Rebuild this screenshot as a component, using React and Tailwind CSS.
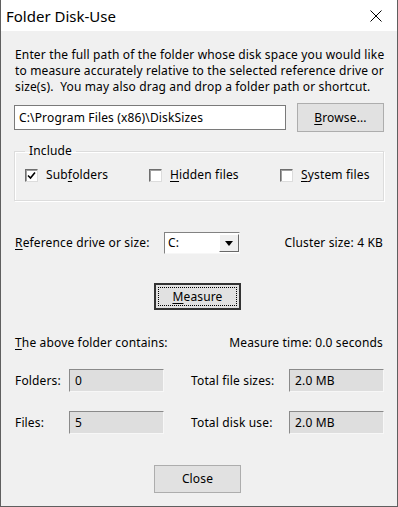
import React from 'react';

const font = { fontFamily: '"Noto Sans", "Liberation Sans", sans-serif' };

const Key = ({ children }) => <span className="underline underline-offset-2">{children}</span>;

const CheckBox = ({ checked, children, className }) => (
  <label className={`flex items-center gap-[8px] ${className}`}>
    <span className="flex h-[13px] w-[13px] items-center justify-center border-t border-l border-b border-r border-t-[#6e6e6e] border-l-[#6e6e6e] border-b-[#dcdcdc] border-r-[#dcdcdc] bg-white shadow-[inset_1px_1px_0_#a0a0a0]">
      {checked && (
        <svg width="9" height="9" viewBox="0 0 9 9">
          <path d="M1 4.5 L3.5 7 L8 1.5" fill="none" stroke="#000" strokeWidth="1.6" />
        </svg>
      )}
    </span>
    <span>{children}</span>
  </label>
);

const ReadField = ({ value }) => (
  <div className="flex h-[23px] w-[95px] items-center border-t border-l border-b border-r border-t-[#8a8a8a] border-l-[#8a8a8a] border-b-[#f7f7f7] border-r-[#f7f7f7] bg-[#dedede] pl-[5px]">
    {value}
  </div>
);

export default function App() {
  return (
    <div className="h-[507px] w-[398px] overflow-hidden border-l border-r border-b border-[#5f5f5f] bg-[#f0f0f0] text-[12px] leading-[16px] tracking-[0.15px] text-black" style={font}>
      {/* title bar */}
      <div className="flex h-[31px] items-center justify-between bg-white pl-[5px] pr-[15px] tracking-normal">
        <span className="text-[15px]">Folder Disk-Use</span>
        <svg width="12" height="12" viewBox="0 0 12 12">
          <path d="M0.5 0.5 L11.5 11.5 M11.5 0.5 L0.5 11.5" stroke="#000" strokeWidth="1" />
        </svg>
      </div>

      <div className="px-[13px] pt-[16px]">
        <p className="ml-[1px] whitespace-nowrap">
          Enter the full path of the folder whose disk space you would like<br />
          to measure accurately relative to the selected reference drive or<br />
          size(s).&nbsp; You may also drag and drop a folder path or shortcut.
        </p>

        <div className="mt-[8px] flex items-center justify-between">
          <div className="flex h-[25px] w-[272px] items-center border border-[#7a7a7a] bg-white pl-[4px]">
            C:\Program Files (x86)\DiskSizes
          </div>
          <button className="h-[29px] w-[87px] border border-[#adadad] bg-[#e1e1e1]">
            <Key>B</Key>rowse...
          </button>
        </div>

        <fieldset className="mt-[11px] h-[58px] border border-[#dcdcdc] pl-[10px] shadow-[inset_1px_1px_0_#ffffff,1px_1px_0_#ffffff]">
          <legend className="px-[4px]">Include</legend>
          <div className="mt-[8px] flex">
            <CheckBox checked className="w-[124px]">Sub<Key>f</Key>olders</CheckBox>
            <CheckBox className="w-[131px]"><Key>H</Key>idden files</CheckBox>
            <CheckBox><Key>S</Key>ystem files</CheckBox>
          </div>
        </fieldset>

        <div className="mt-[31px] flex items-center justify-between">
          <div className="flex items-center">
            <span className="ml-[1px] w-[149px]"><Key>R</Key>eference drive or size:</span>
            <div className="flex h-[22px] w-[76px] items-center border-t border-l border-b border-r border-t-[#828282] border-l-[#828282] border-b-[#f7f7f7] border-r-[#f7f7f7] bg-white">
              <span className="flex-1 pl-[3px]">C:</span>
              <span className="flex h-[18px] w-[20px] items-center justify-center border border-b-[#696969] border-r-[#696969] border-t-white border-l-white bg-[#f0f0f0]">
                <svg width="8" height="5" viewBox="0 0 8 5">
                  <path d="M0 0 H8 L4 5 Z" fill="#000" />
                </svg>
              </span>
            </div>
          </div>
          <span className="mr-[1px]">Cluster size: 4 KB</span>
        </div>

        <div className="mt-[29px] flex justify-center pr-[3px]">
          <button className="flex h-[27px] w-[87px] items-center justify-center border-2 border-[#333333] bg-[#e1e1e1] p-[2px]">
            <span className="flex h-full w-full items-center justify-center border border-dotted border-black">
              <Key>M</Key>easure
            </span>
          </button>
        </div>

        <div className="mt-[25px] flex items-center justify-between">
          <span className="ml-[1px]"><Key>T</Key>he above folder contains:</span>
          <span className="mr-[1px]">Measure time: 0.0 seconds</span>
        </div>

        <div className="mt-[18px] flex items-center">
          <span className="ml-[1px] w-[54px]">Folders:</span>
          <ReadField value="0" />
          <span className="ml-[27px] w-[98px]">Total file sizes:</span>
          <ReadField value="2.0 MB" />
        </div>

        <div className="mt-[19px] flex items-center">
          <span className="ml-[1px] w-[54px]">Files:</span>
          <ReadField value="5" />
          <span className="ml-[27px] w-[98px]">Total disk use:</span>
          <ReadField value="2.0 MB" />
        </div>

        <div className="mt-[31px] flex justify-center pr-[3px]">
          <button className="h-[28px] w-[87px] border border-[#adadad] bg-[#e1e1e1]">Close</button>
        </div>
      </div>
    </div>
  );
}
